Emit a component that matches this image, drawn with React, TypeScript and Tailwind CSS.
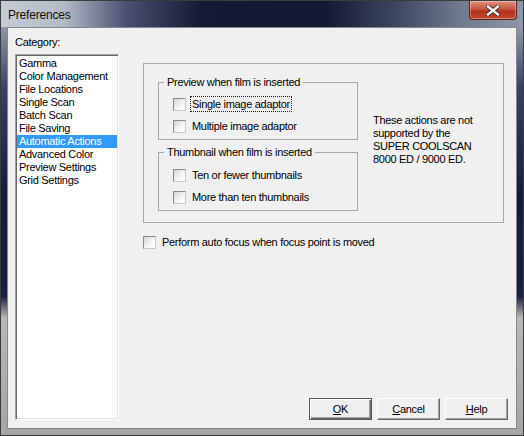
const font = "font-['Liberation_Sans',Arial,sans-serif]";

const categories = [
  "Gamma",
  "Color Management",
  "File Locations",
  "Single Scan",
  "Batch Scan",
  "File Saving",
  "Automatic Actions",
  "Advanced Color",
  "Preview Settings",
  "Grid Settings",
];

function Box() {
  return (
    <span className="w-[13px] h-[13px] shrink-0 border border-t-[#8a8a8a] border-l-[#8a8a8a] border-r-[#c8c8c8] border-b-[#c8c8c8] bg-[linear-gradient(135deg,#d4d4d4,#f4f4f4_55%,#ffffff)]" />
  );
}

function Check({ label, focused }: { label: string; focused?: boolean }) {
  return (
    <div className="flex items-center h-[16px]">
      <Box />
      <span
        className={
          "ml-[4px] px-[1px] leading-[14px] border " +
          (focused ? "border-dotted border-[#222]" : "border-transparent")
        }
      >
        {label}
      </span>
    </div>
  );
}

function Group({ title, children }: { title: string; children: React.ReactNode }) {
  return (
    <fieldset className="w-[200px] border border-[#a7a7a7] pb-[5px]">
      <legend className="ml-[5px] px-[3px] leading-[13px]">{title}</legend>
      <div className="pl-[14px]">{children}</div>
    </fieldset>
  );
}

function Button({ label, def }: { label: string; def?: boolean }) {
  return (
    <button
      className={
        "w-[63px] h-[22px] flex items-center justify-center bg-[#f0f0f0] " +
        (def
          ? "border border-[#5a5a5a] shadow-[inset_1px_1px_0_#fff,inset_-1px_-1px_0_#696969,inset_-2px_-2px_0_#a0a0a0]"
          : "border border-t-white border-l-white border-r-[#696969] border-b-[#696969] shadow-[inset_-1px_-1px_0_#a0a0a0]")
      }
    >
      <u>{label[0]}</u>
      {label.slice(1)}
    </button>
  );
}

export default function App() {
  return (
    <div
      className={
        font +
        " w-[524px] h-[436px] flex flex-col text-[11px] leading-[13px] tracking-[-0.3px] text-black bg-[linear-gradient(to_bottom,#b5bac4_0%,#3a4262_20%,#161b38_45%,#1a1f3d_68%,#b8b8b8_73%,#a5a5a5_100%)] border border-[#3c3c3c]"
      }
    >
      {/* title bar */}
      <div className="h-[26px] flex items-start shrink-0 bg-[linear-gradient(to_right,#c6ccd6_0%,#b4bac6_12%,#4a5070_24%,#161a36_38%,#141834_62%,#3e4862_76%,#6f7a90_88%,#8d97a8_100%)]">
        <span className="pl-[7px] pt-[7px] text-[12px] leading-[15px] tracking-[-0.2px] text-[#111]">
          Preferences
        </span>
        <div className="ml-auto mr-[6px] w-[48px] h-[19px] rounded-b-[4px] border border-t-0 border-[#5b2419] bg-[linear-gradient(to_bottom,#e0907e_0%,#c9553f_45%,#b1301a_55%,#c4482c_100%)] flex items-center justify-center shadow-[inset_0_0_0_1px_rgba(255,255,255,0.35)]">
          <svg width="14" height="11" viewBox="0 0 14 11">
            <path d="M2 1.5 L12 9.5 M12 1.5 L2 9.5" stroke="#3a2a2a" strokeWidth="4.2" strokeLinecap="square" />
            <path d="M2 1.5 L12 9.5 M12 1.5 L2 9.5" stroke="#f4f4f4" strokeWidth="2.4" strokeLinecap="square" />
          </svg>
        </div>
      </div>

      {/* client area */}
      <div className="flex-1 mx-[6px] mb-[6px] border border-[#828790] bg-[#f0f0f0] flex pb-[8px]">
        {/* left column */}
        <div className="flex flex-col pl-[7px] pt-[8px] w-[111px]">
          <span>Category:</span>
          <ul className="mt-[5px] flex-1 border border-t-[#a0a0a0] border-l-[#a0a0a0] border-r-white border-b-white shadow-[inset_1px_1px_0_#696969,inset_-1px_-1px_0_#e3e3e3] bg-white pt-[2px] px-[1px]">
            {categories.map((c) => (
              <li
                key={c}
                className={
                  "h-[13px] pl-[2px] whitespace-nowrap " +
                  (c === "Automatic Actions" ? "bg-[#3399ff] text-white" : "")
                }
              >
                {c}
              </li>
            ))}
          </ul>
        </div>

        {/* right column */}
        <div className="flex-1 flex flex-col pl-[24px] pr-[8px] pt-[35px]">
          <div className="w-[361px] border border-[#a7a7a7] pt-[12px] pl-[14px] pb-[11px] flex">
            <div className="flex flex-col gap-[6px]">
              <Group title="Preview when film is inserted">
                <div className="flex flex-col gap-[6px] mt-[7px]">
                  <Check label="Single image adaptor" focused />
                  <Check label="Multiple image adaptor" />
                </div>
              </Group>
              <Group title="Thumbnail when film is inserted">
                <div className="flex flex-col gap-[6px] mt-[8px]">
                  <Check label="Ten or fewer thumbnails" />
                  <Check label="More than ten thumbnails" />
                </div>
              </Group>
            </div>
            <div className="ml-[15px] self-center mb-[7px]">
              <p>These actions are not</p>
              <p>supported by the</p>
              <p>SUPER COOLSCAN</p>
              <p>8000 ED / 9000 ED.</p>
            </div>
          </div>

          <div className="mt-[11px]">
            <Check label="Perform auto focus when focus point is moved" />
          </div>

          <div className="mt-auto flex justify-end gap-[5px]">
            <Button label="OK" def />
            <Button label="Cancel" />
            <Button label="Help" />
          </div>
        </div>
      </div>
    </div>
  );
}
